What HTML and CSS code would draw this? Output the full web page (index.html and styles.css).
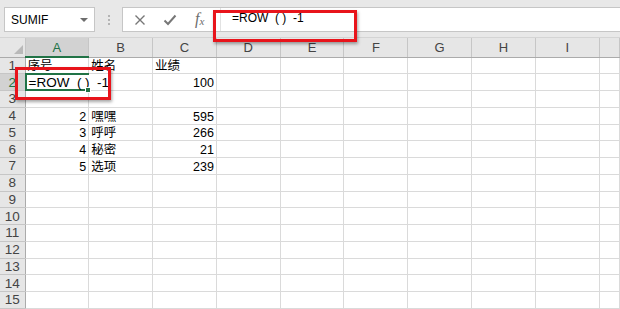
FILE: index.html
```html
<!DOCTYPE html>
<html lang="zh-CN">
<head>
    <meta charset="UTF-8">
    <title>ROW 公式</title>
    <link rel="stylesheet" href="styles.css">
</head>
<body>
    <div class="toolbar">
        <div class="namebox">
            <span>SUMIF</span>
            <span class="caret"></span>
        </div>
        <div class="grip">
            <span></span><span></span><span></span>
        </div>
        <div class="formula">
            <div class="fx-buttons">
                <svg class="btn" width="12" height="12" viewBox="0 0 12 12">
                    <path d="M1.5 1.5 L10.5 10.5 M10.5 1.5 L1.5 10.5" stroke="#777" stroke-width="1.4" fill="none"/>
                </svg>
                <svg class="btn" width="14" height="12" viewBox="0 0 14 12">
                    <path d="M1.5 6.5 L5 10 L12.5 1.5" stroke="#777" stroke-width="2" fill="none"/>
                </svg>
                <span class="fx">f<sub>x</sub></span>
            </div>
            <div class="input">=ROW  ( )  -1</div>
        </div>
    </div>

    <table class="sheet">
        <colgroup>
            <col class="rh">
            <col class="c"><col class="c"><col class="c"><col class="c"><col class="c">
            <col class="c"><col class="c"><col class="c"><col class="c">
            <col>
        </colgroup>
        <thead>
            <tr>
                <th class="corner"><span class="tri"></span></th>
                <th class="on">A</th><th>B</th><th>C</th><th>D</th><th>E</th>
                <th>F</th><th>G</th><th>H</th><th>I</th><th></th>
            </tr>
        </thead>
        <tbody>
            <tr><th>1</th><td>序号</td><td>姓名</td><td>业绩</td><td></td><td></td><td></td><td></td><td></td><td></td><td></td></tr>
            <tr><th class="on">2</th><td class="active"><span class="editor">=ROW  ( )  -1<i class="cursor"></i></span><span class="handle"></span></td><td></td><td class="num">100</td><td></td><td></td><td></td><td></td><td></td><td></td><td></td></tr>
            <tr><th>3</th><td></td><td></td><td></td><td></td><td></td><td></td><td></td><td></td><td></td><td></td></tr>
            <tr><th>4</th><td class="num">2</td><td>嘿嘿</td><td class="num">595</td><td></td><td></td><td></td><td></td><td></td><td></td><td></td></tr>
            <tr><th>5</th><td class="num">3</td><td>呼呼</td><td class="num">266</td><td></td><td></td><td></td><td></td><td></td><td></td><td></td></tr>
            <tr><th>6</th><td class="num">4</td><td>秘密</td><td class="num">21</td><td></td><td></td><td></td><td></td><td></td><td></td><td></td></tr>
            <tr><th>7</th><td class="num">5</td><td>选项</td><td class="num">239</td><td></td><td></td><td></td><td></td><td></td><td></td><td></td></tr>
            <tr><th>8</th><td></td><td></td><td></td><td></td><td></td><td></td><td></td><td></td><td></td><td></td></tr>
            <tr><th>9</th><td></td><td></td><td></td><td></td><td></td><td></td><td></td><td></td><td></td><td></td></tr>
            <tr><th>10</th><td></td><td></td><td></td><td></td><td></td><td></td><td></td><td></td><td></td><td></td></tr>
            <tr><th>11</th><td></td><td></td><td></td><td></td><td></td><td></td><td></td><td></td><td></td><td></td></tr>
            <tr><th>12</th><td></td><td></td><td></td><td></td><td></td><td></td><td></td><td></td><td></td><td></td></tr>
            <tr><th>13</th><td></td><td></td><td></td><td></td><td></td><td></td><td></td><td></td><td></td><td></td></tr>
            <tr><th>14</th><td></td><td></td><td></td><td></td><td></td><td></td><td></td><td></td><td></td><td></td></tr>
            <tr><th>15</th><td></td><td></td><td></td><td></td><td></td><td></td><td></td><td></td><td></td><td></td></tr>
        </tbody>
    </table>

    <!-- annotation boxes drawn over the screenshot -->
    <div class="mark mark-bar"></div>
    <div class="mark mark-cell"></div>
</body>
</html>
```

FILE: styles.css
```css
:root {
    --bar-bg: #e8e8e8;
    --head-bg: #e6e6e6;
    --head-on: #d2d2d2;
    --grid: #dadada;
    --head-line: #c6c6c6;
    --green: #217346;
    --text: #000;
    --mark: #e8141b;
}

* {
    box-sizing: border-box;
    margin: 0;
    padding: 0;
}

body {
    width: 620px;
    height: 309px;
    overflow: hidden;
    position: relative;
    background: #fff;
    font-family: "Liberation Sans", "Noto Sans CJK SC", sans-serif;
    font-size: 12px;
    color: var(--text);
}

/* Formula bar */
.toolbar {
    height: 38px;
    background: var(--bar-bg);
    display: flex;
    align-items: flex-start;
    padding: 7px 0 0 4px;
    border-bottom: 1px solid #d4d4d4;
}

.namebox {
    width: 91px;
    height: 25px;
    background: #fff;
    border: 1px solid #c6c6c6;
    display: flex;
    align-items: center;
    justify-content: space-between;
    padding: 0 6px 0 6px;
    font-size: 12px;
}

.caret {
    width: 0;
    height: 0;
    border-left: 4px solid transparent;
    border-right: 4px solid transparent;
    border-top: 4px solid #6d6d6d;
}

.grip {
    width: 27px;
    height: 25px;
    display: flex;
    flex-direction: column;
    align-items: center;
    justify-content: center;
    gap: 2px;
}

.grip span {
    width: 2px;
    height: 2px;
    background: #b4b4b4;
}

.formula {
    flex: 1;
    height: 25px;
    display: flex;
    background: #fff;
    border: 1px solid #c6c6c6;
    border-right: none;
}

.fx-buttons {
    width: 97px;
    display: flex;
    align-items: center;
    gap: 17px;
    padding-left: 11px;
}

.fx {
    font-family: "Liberation Serif", serif;
    font-style: italic;
    font-size: 16px;
    color: #6d6d6d;
    margin-left: 1px;
    margin-top: -2px;
}

.fx sub {
    font-size: 11px;
    vertical-align: -1px;
}

.input {
    flex: 1;
    padding: 3px 0 0 11px;
    font-size: 12px;
    white-space: pre;
    border-left: 1px solid #e2e2e2;
}

/* Sheet grid */
.sheet {
    width: 620px;
    table-layout: fixed;
    border-collapse: collapse;
}

.sheet col.rh {
    width: 25px;
}

.sheet col.c {
    width: 63.8px;
}

.sheet thead th {
    height: 19px;
    background: var(--head-bg);
    font-weight: normal;
    font-size: 13px;
    color: #444;
    border-right: 1px solid var(--head-line);
    border-bottom: 1px solid #ababab;
    padding-top: 1px;
}

.sheet thead th.on {
    background: var(--head-on);
    color: var(--green);
    border-bottom: 2px solid var(--green);
}

.corner {
    position: relative;
}

.tri {
    position: absolute;
    right: 2px;
    bottom: 3px;
    width: 0;
    height: 0;
    border-left: 9px solid transparent;
    border-bottom: 9px solid #b9b9b9;
}

.sheet tbody tr {
    height: 16.75px;
}

.sheet tbody th {
    background: var(--head-bg);
    font-weight: normal;
    font-size: 13.5px;
    color: #444;
    text-align: center;
    border-right: 1px solid #ababab;
    border-bottom: 1px solid var(--head-line);
    line-height: 14px;
    padding-top: 1px;
}

.sheet tbody th.on {
    background: var(--head-on);
    color: var(--green);
}

.sheet td {
    border-right: 1px solid var(--grid);
    border-bottom: 1px solid var(--grid);
    padding: 0 2px;
    font-size: 12.5px;
    line-height: 14px;
    white-space: nowrap;
    vertical-align: bottom;
}

.sheet td.num {
    text-align: right;
}

/* Cell being edited */
.sheet td.active {
    position: relative;
    border-right-color: transparent;
}

.sheet td.active::before {
    content: "";
    position: absolute;
    left: -1px;
    top: -1px;
    right: -1px;
    bottom: -1px;
    border: 2px solid var(--green);
}

.editor {
    position: absolute;
    left: 1px;
    top: 1px;
    bottom: 1px;
    width: 84px;
    background: #fff;
    font-size: 13.5px;
    line-height: 15px;
    padding-left: 2px;
    white-space: pre;
    z-index: 1;
}

.cursor {
    display: inline-block;
    width: 1px;
    height: 13px;
    background: #000;
    vertical-align: -2px;
}

.handle {
    position: absolute;
    right: -3px;
    bottom: -3px;
    width: 6px;
    height: 6px;
    background: var(--green);
    border: 1px solid #fff;
    z-index: 2;
}

/* Red annotation boxes */
.mark {
    position: absolute;
    border: 3px solid var(--mark);
    box-shadow: 1px 2px 3px rgba(0, 0, 0, 0.35);
    z-index: 5;
}

.mark-bar {
    left: 213px;
    top: 10px;
    width: 144px;
    height: 32px;
}

.mark-cell {
    left: 15px;
    top: 67px;
    width: 96px;
    height: 33px;
}
```
